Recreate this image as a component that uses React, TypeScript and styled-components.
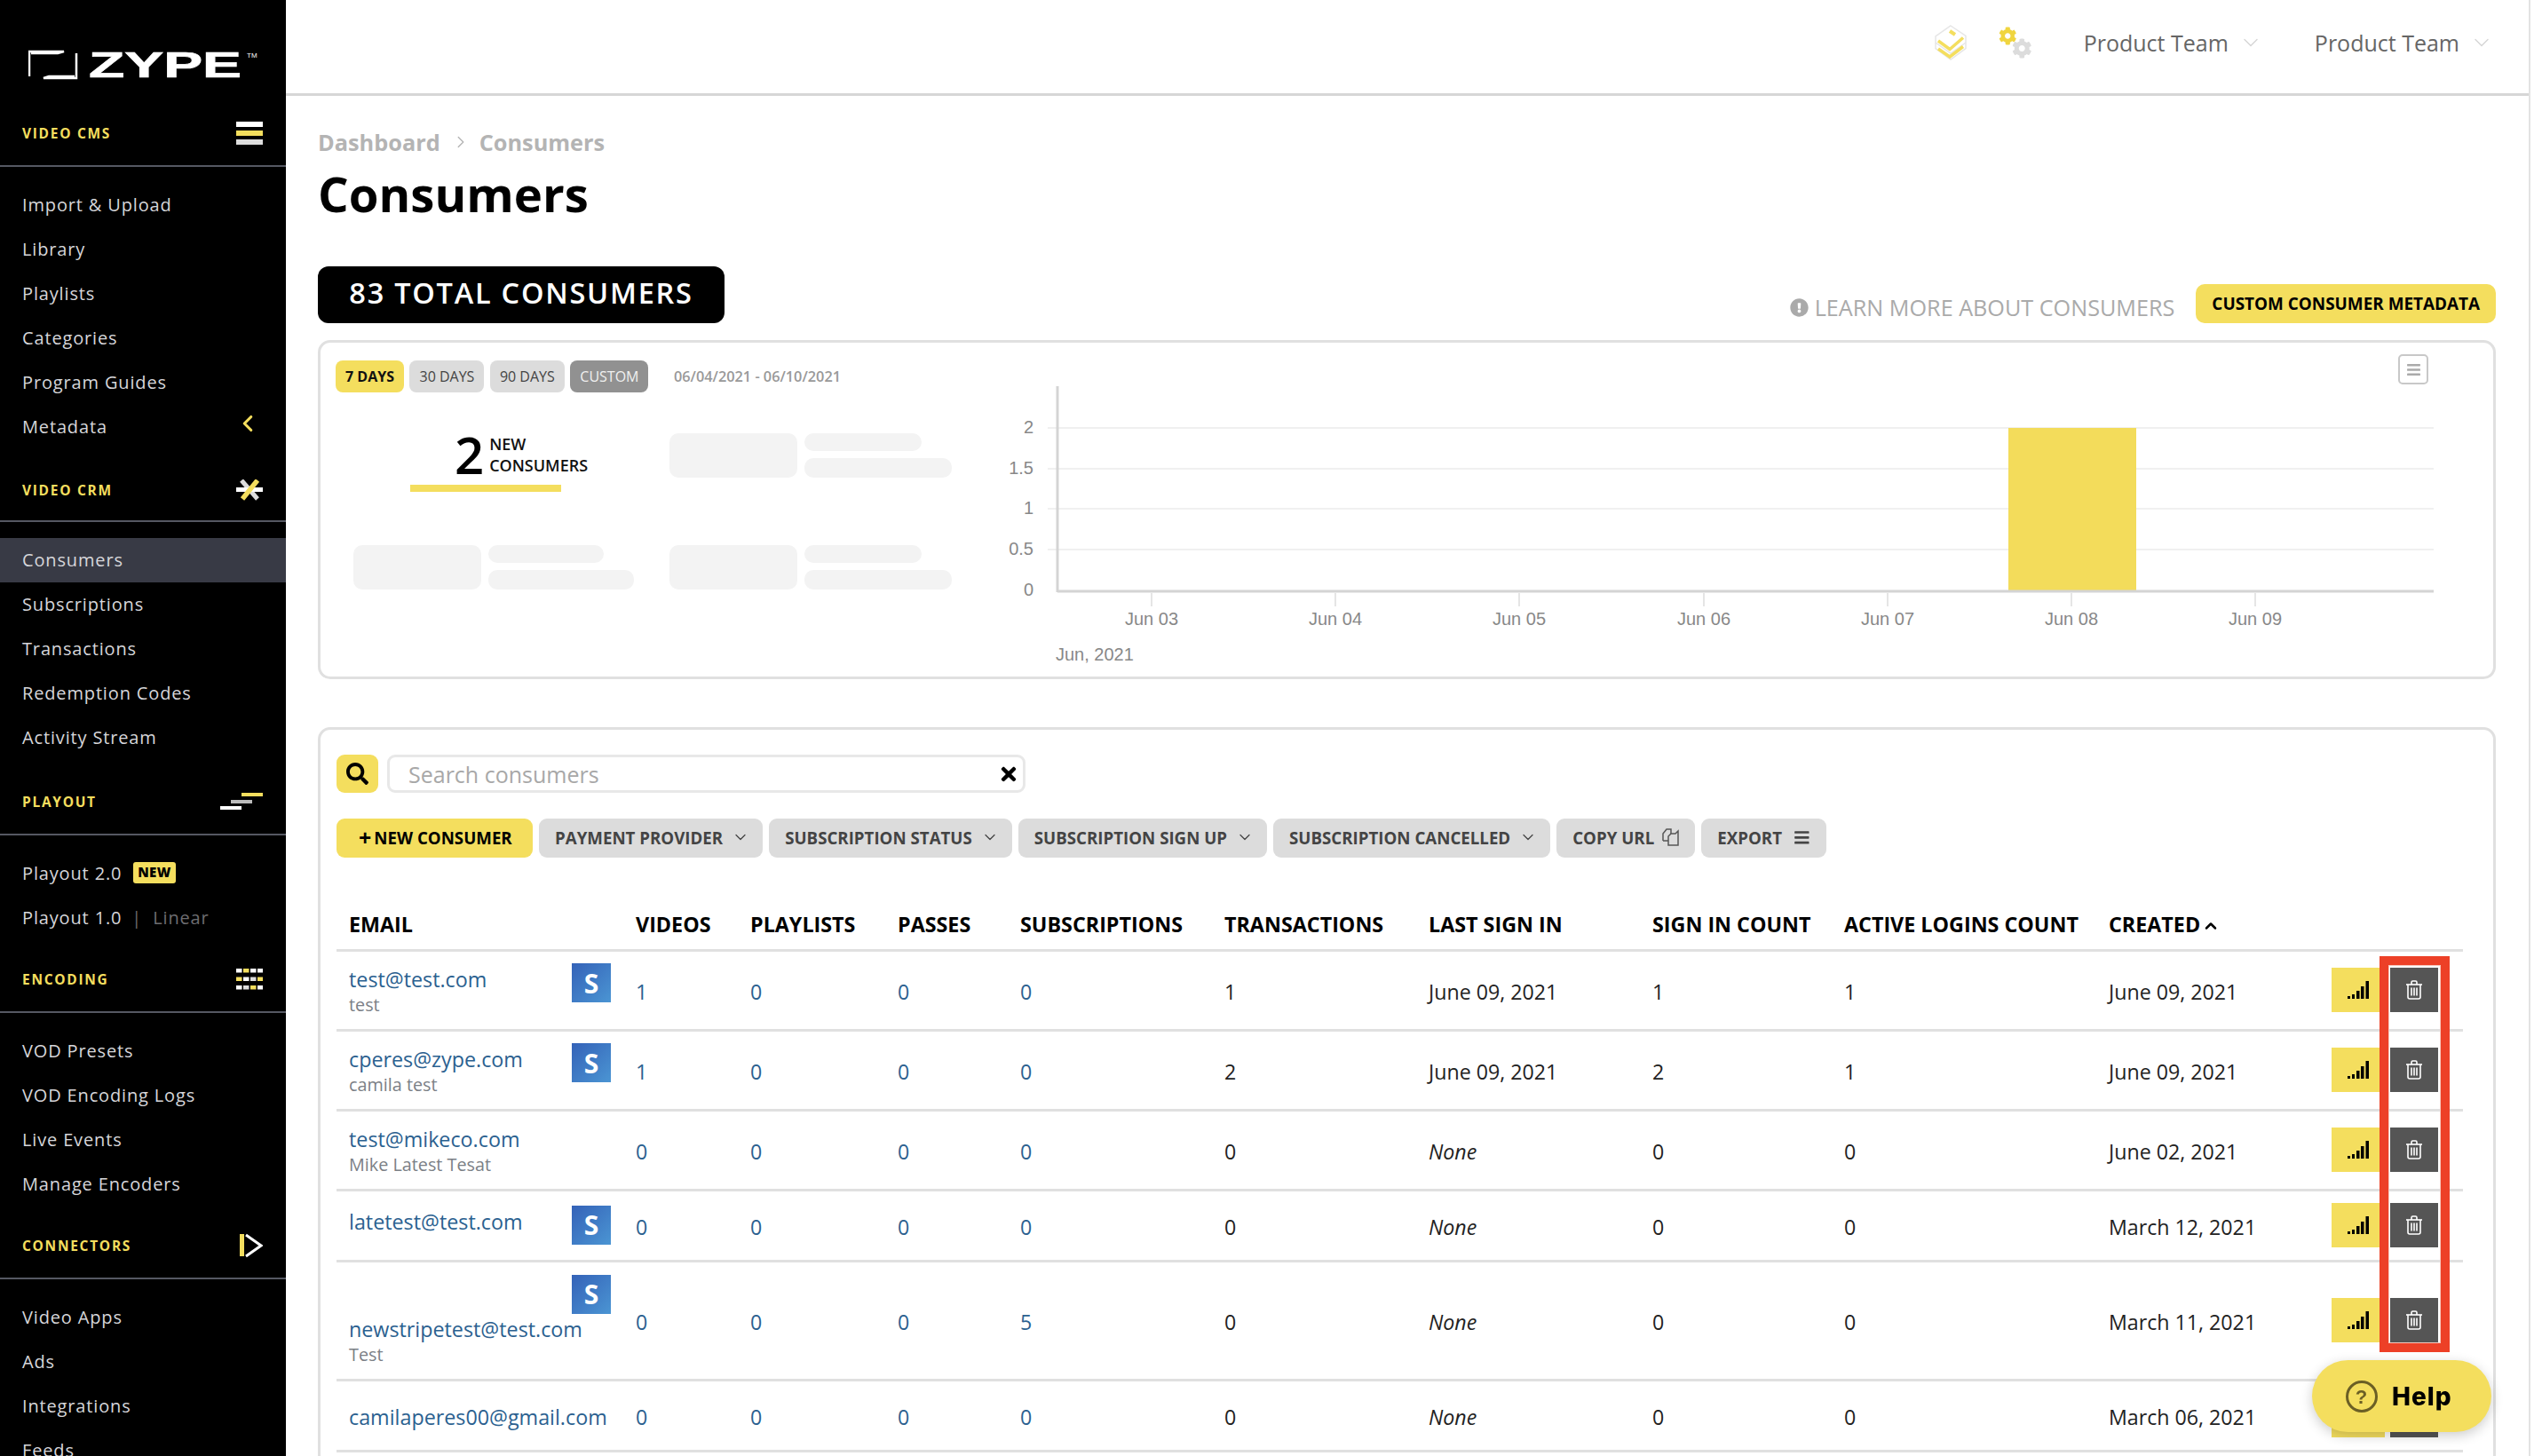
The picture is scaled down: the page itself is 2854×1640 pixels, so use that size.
import React from 'react';
import styled, { createGlobalStyle } from 'styled-components';
import { FaSearch, FaTimes, FaCog, FaBars, FaExclamationCircle } from 'react-icons/fa';
import { ChevronDown, ChevronRight, ChevronLeft, ChevronUp } from 'lucide-react';

const YELLOW = '#f4de5e';

const GlobalStyle = createGlobalStyle`
  html, body {
    margin: 0;
    padding: 0;
    background: #fff;
    font-family: "Open Sans", "Liberation Sans", sans-serif;
  }
  * {
    box-sizing: border-box;
  }
`;

const Page = styled.div`
  display: flex;
  width: 2854px;
  height: 1640px;
  overflow: hidden;
  padding-right: 4px;
`;

const Sidebar = styled.aside`
  flex: 0 0 322px;
  height: 1640px;
  overflow: hidden;
  background: #000;
`;

const LogoBlock = styled.div`
  height: 114px;
  padding: 56px 0 0 32px;
`;

const SectionHeader = styled.div<{ $top?: number; $shift?: number }>`
  display: flex;
  align-items: center;
  justify-content: space-between;
  height: 74px;
  margin-top: ${({ $top }) => $top ?? 0}px;
  padding: ${({ $shift }) => $shift ?? 0}px 26px 0 25px;
  border-bottom: 2px solid #555862;
  color: ${YELLOW};
  font-size: 15.5px;
  font-weight: 700;
  letter-spacing: 1.7px;
`;

const NavList = styled.ul`
  margin: 0;
  padding: 18px 0 0;
  list-style: none;
`;

const NavItem = styled.li<{ $active?: boolean }>`
  display: flex;
  align-items: center;
  justify-content: space-between;
  height: 50px;
  padding: 0 28px 2px 25px;
  background: ${({ $active }) => ($active ? '#383a45' : 'transparent')};
  color: #d6d6da;
  font-size: 20px;
  letter-spacing: 0.85px;
`;

const NavLabel = styled.span`
  display: flex;
  align-items: center;
`;

const CollapseIcon = styled(ChevronLeft)`
  margin-top: -6px;
  color: ${YELLOW};
`;

const NewTag = styled.span`
  display: inline-block;
  height: 24px;
  margin-left: 13px;
  padding: 0 5px;
  border-radius: 3px;
  background: ${YELLOW};
  color: #000;
  font-size: 15px;
  font-weight: 800;
  line-height: 23px;
  letter-spacing: 0.3px;
`;

const Muted = styled.span`
  margin-left: 11px;
  color: #6d6d70;
`;

const Main = styled.main`
  flex: 1;
  min-width: 0;
  border-right: 2px solid #e3e3e3;
`;

const TopBar = styled.header`
  display: flex;
  align-items: center;
  justify-content: flex-end;
  height: 108px;
  padding: 0 39px 10px 0;
  border-bottom: 3px solid #d6d6d6;
`;

const StackIcon = styled.svg`
  width: 36px;
  height: 40px;
  margin-right: 36px;
`;

const Gears = styled.div`
  display: flex;
  width: 38px;
  height: 36px;
  color: #f0d53f;
  font-size: 21px;

  svg:last-child {
    align-self: flex-end;
    margin-left: -5px;
    color: #dcdcdc;
    font-size: 23px;
  }
`;

const TeamMenu = styled.div`
  display: flex;
  align-items: center;
  margin-left: 58px;
  color: #666;
  font-size: 25px;

  svg {
    margin-left: 11px;
    color: #d5d5d5;
  }
`;

const Content = styled.div`
  padding: 36px 37px 0 36px;
`;

const Breadcrumb = styled.div`
  display: flex;
  align-items: center;
  height: 32px;
  color: #b4b4b4;
  font-size: 25.3px;
  font-weight: 700;

  svg {
    margin: 0 10px 0 12px;
    stroke-width: 1.5;
  }
`;

const Title = styled.h1`
  margin: 4px 0 44px;
  color: #000;
  font-size: 54.5px;
  font-weight: 700;
  line-height: 76px;
`;

const SummaryRow = styled.div`
  display: flex;
  align-items: flex-end;
  justify-content: space-between;
  margin-bottom: 19px;
`;

const TotalBadge = styled.div`
  display: flex;
  align-items: center;
  justify-content: center;
  width: 458px;
  height: 64px;
  padding-bottom: 5px;
  border-radius: 12px;
  background: #000;
  color: #fff;
  font-size: 32.5px;
  font-weight: 600;
  letter-spacing: 1.75px;
`;

const SummaryActions = styled.div`
  display: flex;
  align-items: flex-end;
  gap: 24px;
`;

const LearnMore = styled.span`
  display: flex;
  align-items: center;
  gap: 7px;
  color: #aaa;
  font-size: 25.2px;
  line-height: 36px;

  svg {
    font-size: 21px;
  }
`;

const MetadataButton = styled.div`
  display: flex;
  align-items: center;
  height: 44px;
  padding: 0 18px;
  border-radius: 10px;
  background: ${YELLOW};
  color: #000;
  font-size: 18.9px;
  font-weight: 700;
`;

const Panel = styled.section`
  position: relative;
  border: 3px solid #e0e0e0;
  border-radius: 14px;
  background: #fff;
`;

const ChartPanel = styled(Panel)`
  display: flex;
  height: 382px;
  margin-bottom: 54px;
`;

const StatsColumn = styled.div`
  flex: 0 0 739px;
  padding: 20px 0 0 17px;
`;

const RangeRow = styled.div`
  display: flex;
  align-items: center;
`;

const RangeButton = styled.div<{ $variant?: 'active' | 'custom' }>`
  display: flex;
  align-items: center;
  height: 36px;
  margin-right: 6.5px;
  padding: 0 11px;
  border-radius: 8px;
  background: ${({ $variant }) =>
    $variant === 'active' ? YELLOW : $variant === 'custom' ? '#919191' : '#dcdcdc'};
  color: ${({ $variant }) =>
    $variant === 'active' ? '#111' : $variant === 'custom' ? '#f0f0f0' : '#444'};
  font-size: 16px;
  font-weight: ${({ $variant }) => ($variant === 'active' ? 700 : 400)};
`;

const DateRange = styled.span`
  margin-left: 22px;
  color: #999;
  font-size: 16.3px;
  font-weight: 600;
`;

const StatsGrid = styled.div`
  display: grid;
  grid-template-columns: 318px 318px;
  grid-template-rows: 50px 50px;
  gap: 76px 38px;
  margin: 46px 0 0 20px;
`;

const StatCell = styled.div`
  position: relative;
`;

const StatValue = styled.div`
  display: flex;
  align-items: center;
  margin: -7px 0 0 114px;
`;

const StatNumber = styled.span`
  color: #000;
  font-size: 58px;
  font-weight: 600;
  line-height: 62px;
`;

const StatLabel = styled.span`
  margin-left: 6px;
  color: #111;
  font-size: 18px;
  font-weight: 600;
  line-height: 24px;
`;

const StatUnderline = styled.div`
  width: 170px;
  height: 8px;
  margin: 3px 0 0 64px;
  background: ${YELLOW};
`;

const SkeletonCell = styled.div`
  display: grid;
  grid-template-columns: 144px 1fr;
  grid-template-rows: 20px 22px;
  gap: 8px;
`;

const SkeletonBlock = styled.div<{ $w?: number }>`
  width: ${({ $w }) => ($w ? `${$w}px` : 'auto')};
  border-radius: 10px;
  background: #f3f3f3;

  &:first-child {
    grid-row: 1 / span 2;
  }
`;

const ChartSvg = styled.svg`
  flex: 0 0 1690px;
  height: 340px;
  margin-top: 39px;
`;

const ChartMenu = styled.div`
  position: absolute;
  top: 13px;
  right: 73px;
  display: flex;
  align-items: center;
  justify-content: center;
  width: 34px;
  height: 34px;
  border: 2px solid #c8c8c8;
  border-radius: 5px;
  color: #aaa;
  font-size: 17px;
`;

const ConsumersPanel = styled(Panel)`
  padding: 28px 34px 0 18px;
  height: 900px;
`;

const SearchRow = styled.div`
  display: flex;
  gap: 10px;
`;

const SearchButton = styled.div`
  display: flex;
  align-items: center;
  justify-content: center;
  width: 47px;
  height: 43px;
  border-radius: 9px;
  background: ${YELLOW};
  color: #000;
  font-size: 25px;
`;

const SearchBox = styled.div`
  display: flex;
  align-items: center;
  justify-content: space-between;
  width: 719px;
  height: 43px;
  padding: 0 4px 0 21px;
  border: 3px solid #e8e8e8;
  border-radius: 9px;
  color: #a8a8a8;
  font-size: 25px;

  svg {
    color: #000;
    font-size: 24px;
  }
`;

const Toolbar = styled.div`
  display: flex;
  gap: 7px;
  margin: 29px 0 48px;
`;

const ToolButton = styled.div<{ $primary?: boolean }>`
  display: flex;
  align-items: center;
  height: 44px;
  padding: 0 18px 2px;
  border-radius: 9px;
  background: ${({ $primary }) => ($primary ? YELLOW : '#dcdcdc')};
  color: ${({ $primary }) => ($primary ? '#000' : '#444')};
  font-size: 18.7px;
  font-weight: 700;
  white-space: nowrap;

  svg {
    margin-left: 9px;
  }
`;

const FilterButton = styled(ToolButton)`
  padding-right: 15px;

  svg {
    margin-left: 10px;
  }
`;

const ExportButton = styled(ToolButton)`
  svg {
    margin-left: 13px;
  }
`;

const NewButton = styled(ToolButton)`
  width: 221px;
  padding: 0 0 2px 25px;
`;

const PlusSign = styled.span`
  margin-right: 3px;
  font-size: 25px;
  line-height: 1;
`;

const Table = styled.table`
  width: 2395px;
  border-collapse: collapse;
  table-layout: fixed;
`;

const HeadCell = styled.th`
  height: 56px;
  padding: 0 14px;
  border-bottom: 3px solid #e0e0e0;
  color: #000;
  font-size: 23.3px;
  font-weight: 700;
  text-align: left;
  white-space: nowrap;
`;

const SortIcon = styled(ChevronUp)`
  margin-left: 2px;
  vertical-align: -3px;
`;

const Row = styled.tr<{ $h: number }>`
  height: ${({ $h }) => $h}px;
  border-bottom: 3px solid #e0e0e0;
`;

const Cell = styled.td`
  padding: 4px 14px 0;
  color: #222;
  font-size: 23.2px;
  vertical-align: middle;
  white-space: nowrap;
`;

const EmailCell = styled(Cell)`
  white-space: normal;
`;

const ProviderBadge = styled.div`
  float: right;
  display: flex;
  align-items: center;
  justify-content: center;
  width: 44px;
  height: 44px;
  margin: -3px 0 2px 4px;
  background: linear-gradient(135deg, #3462b8, #4b95d3);
  color: #fff;
  font-size: 30px;
  font-weight: 700;
`;

const Email = styled.div`
  color: #2b6190;
  font-size: 23.3px;
  line-height: 30px;
`;

const ConsumerName = styled.div`
  color: #7b8086;
  font-size: 19.8px;
  line-height: 28px;
`;

const CountLink = styled.span`
  color: #2b6190;
`;

const Italic = styled.span`
  font-style: italic;
`;

const ActionsCell = styled.td`
  padding: 0 14px;
  vertical-align: middle;
`;

const Actions = styled.div`
  display: flex;
  gap: 6px;
`;

const ActionButton = styled.div<{ $dark?: boolean }>`
  display: flex;
  align-items: center;
  justify-content: center;
  width: ${({ $dark }) => ($dark ? 54 : 60)}px;
  height: 50px;
  background: ${({ $dark }) => ($dark ? '#555' : YELLOW)};
`;

const Highlight = styled.div`
  position: absolute;
  top: 255px;
  left: 2319px;
  width: 79px;
  height: 446px;
  border: 10px solid #ed4027;
  box-shadow: inset 0 0 0 1px #f8c8bd;
  pointer-events: none;
`;

const HelpButton = styled.div`
  position: fixed;
  top: 1532px;
  left: 2604px;
  display: flex;
  align-items: center;
  gap: 16px;
  width: 202px;
  height: 81px;
  padding-left: 38px;
  border-radius: 41px;
  background: ${YELLOW};
  box-shadow: 0 4px 14px rgba(0, 0, 0, 0.2);
  color: #000;
  font-family: "Inter", "Open Sans", sans-serif;
  font-size: 28px;
  font-weight: 800;
  letter-spacing: 1px;
`;

const ZypeLogo = () => (
  <svg width="262" height="36" viewBox="0 0 262 36">
    <path d="M1 30V2H40L33 4H3" fill="none" stroke="#fff" strokeWidth="2.5" />
    <path d="M54 4V32H17L23 30H52" fill="none" stroke="#fff" strokeWidth="2.5" />
    <text
      x="68"
      y="31"
      fill="#fff"
      stroke="#fff"
      strokeWidth="0.7"
      fontFamily="Liberation Sans"
      fontWeight="700"
      fontSize="41"
      textLength="172"
      lengthAdjust="spacingAndGlyphs"
    >
      ZYPE
    </text>
    <text x="246" y="9" fill="#fff" fontFamily="Liberation Sans" fontSize="8">
      TM
    </text>
  </svg>
);

const MenuIcon = () => (
  <svg width="30" height="26" viewBox="0 0 30 26">
    <rect y="0" width="30" height="6" fill="#fff" />
    <rect y="10" width="30" height="6" fill={YELLOW} />
    <rect y="20" width="30" height="6" fill="#ddd" />
  </svg>
);

const CrossIcon = () => (
  <svg width="30" height="24" viewBox="0 0 30 24">
    <path d="M6 1 L24 22" stroke="#ddd" strokeWidth="5" />
    <rect y="9" width="30" height="5" fill="#fff" />
    <path d="M24 1 L7 22" stroke={YELLOW} strokeWidth="5.5" />
  </svg>
);

const PlayoutIcon = () => (
  <svg width="48" height="20" viewBox="0 0 48 20">
    <rect x="24" y="0" width="24" height="4" fill={YELLOW} />
    <rect x="12" y="8" width="24" height="4" fill="#bbb" />
    <rect x="0" y="15" width="24" height="4" fill="#fff" />
  </svg>
);

const encodingCells = [
  ['#fff', YELLOW, '#fff', '#fff'],
  [YELLOW, '#fff', '#ddd', YELLOW],
  ['#fff', '#ddd', YELLOW, '#fff'],
];

const EncodingIcon = () => (
  <svg width="30" height="24" viewBox="0 0 30 24">
    {encodingCells.map((row, r) =>
      row.map((fill, c) => (
        <rect key={`${r}-${c}`} x={c * 8} y={r * 9.5} width="6.5" height="4.5" fill={fill} />
      )),
    )}
  </svg>
);

const ConnectorIcon = () => (
  <svg width="26" height="30" viewBox="0 0 26 30">
    <rect x="0" y="2" width="5" height="25" fill={YELLOW} />
    <path d="M7 3L24 15L7 27" fill="none" stroke="#fff" strokeWidth="3" />
  </svg>
);

const SignalIcon = () => (
  <svg width="24" height="20" viewBox="0 0 24 20">
    <rect x="0" y="17" width="3" height="3" fill="#000" />
    <rect x="5" y="15" width="3" height="5" fill="#000" />
    <rect x="10" y="11" width="3.5" height="9" fill="#000" />
    <rect x="15" y="6" width="3.5" height="14" fill="#000" />
    <rect x="20.5" y="0" width="3.5" height="20" fill="#000" />
  </svg>
);

const TrashIcon = () => (
  <svg width="18" height="22" viewBox="0 0 18 22" fill="none" stroke="#fff" strokeWidth="1.6">
    <path d="M0 5H18" />
    <path d="M6 5V2.5C6 1.5 6.6 1 7.5 1H10.5C11.4 1 12 1.5 12 2.5V5" />
    <path d="M2 5V19C2 20.2 2.8 21 4 21H14C15.2 21 16 20.2 16 19V5" />
    <path d="M6 8.5V17.5M9 8.5V17.5M12 8.5V17.5" />
  </svg>
);

const CopyIcon = () => (
  <svg width="19" height="20" viewBox="0 0 19 20" fill="none" stroke="#555" strokeWidth="1.5">
    <path d="M1 14V6L5 1H10V6" />
    <path d="M1 14H7" />
    <path d="M7 19V9L10 6H15L18 3V19Z" />
  </svg>
);

const StackGlyph = () => (
  <StackIcon viewBox="0 0 36 40">
    <path d="M18 1L35 12.5V26.5L18 39L1 26.5V13Z" fill="#fff" stroke="#e6e6e6" strokeWidth="1.5" />
    <path d="M1 20L18 32L35 20" fill="none" stroke="#e6e6e6" strokeWidth="1.5" />
    <path d="M4 18L17 27.5L32 14.5" fill="none" stroke={YELLOW} strokeWidth="3.5" />
    <path d="M4 27L17 36L32 24.5" fill="none" stroke={YELLOW} strokeWidth="3.5" />
    <path d="M17 7L23 11" stroke={YELLOW} strokeWidth="4" />
  </StackIcon>
);

const gridLines = [57, 103, 148, 194];
const yLabels = [
  { label: '2', y: 57 },
  { label: '1.5', y: 103 },
  { label: '1', y: 148 },
  { label: '0.5', y: 194 },
  { label: '0', y: 240 },
];
const xLabels = [
  { label: 'Jun 03', x: 197 },
  { label: 'Jun 04', x: 404 },
  { label: 'Jun 05', x: 611 },
  { label: 'Jun 06', x: 819 },
  { label: 'Jun 07', x: 1026 },
  { label: 'Jun 08', x: 1233 },
  { label: 'Jun 09', x: 1440 },
];

const ConsumersChart = () => (
  <ChartSvg viewBox="0 0 1690 340" fontFamily="Liberation Sans" fontSize="20" fill="#888">
    {gridLines.map((y) => (
      <line key={y} x1="80" x2="1641" y1={y} y2={y} stroke="#f0f0f0" strokeWidth="2" />
    ))}
    <rect x="1162" y="57" width="144" height="183" fill="#f3dc5b" />
    <line x1="91" x2="91" y1="10" y2="242" stroke="#d4d4d4" strokeWidth="3" />
    <line x1="91" x2="1641" y1="241" y2="241" stroke="#d4d4d4" strokeWidth="3" />
    {yLabels.map((t) => (
      <text key={t.label} x="64" y={t.y + 6} textAnchor="end">
        {t.label}
      </text>
    ))}
    {xLabels.map((t) => (
      <g key={t.label}>
        <line x1={t.x} x2={t.x} y1="243" y2="258" stroke="#ddd" strokeWidth="1.5" />
        <text x={t.x} y="279" textAnchor="middle">
          {t.label}
        </text>
      </g>
    ))}
    <text x="89" y="319">
      Jun, 2021
    </text>
  </ChartSvg>
);

const consumers = [
  { h: 90, email: 'test@test.com', name: 'test', stripe: true, videos: 1, subs: 0, tx: 1, last: 'June 09, 2021', signIn: 1, active: 1, created: 'June 09, 2021' },
  { h: 90, email: 'cperes@zype.com', name: 'camila test', stripe: true, videos: 1, subs: 0, tx: 2, last: 'June 09, 2021', signIn: 2, active: 1, created: 'June 09, 2021' },
  { h: 90, email: 'test@mikeco.com', name: 'Mike Latest Tesat', stripe: false, videos: 0, subs: 0, tx: 0, last: null, signIn: 0, active: 0, created: 'June 02, 2021' },
  { h: 80, email: 'latetest@test.com', name: '', stripe: true, videos: 0, subs: 0, tx: 0, last: null, signIn: 0, active: 0, created: 'March 12, 2021' },
  { h: 134, email: 'newstripetest@test.com', name: 'Test', stripe: true, videos: 0, subs: 5, tx: 0, last: null, signIn: 0, active: 0, created: 'March 11, 2021' },
  { h: 80, email: 'camilaperes00@gmail.com', name: '', stripe: false, videos: 0, subs: 0, tx: 0, last: null, signIn: 0, active: 0, created: 'March 06, 2021' },
];

const columns = [323, 129, 166, 138, 230, 230, 252, 216, 298, 251, 162];

const filters = ['PAYMENT PROVIDER', 'SUBSCRIPTION STATUS', 'SUBSCRIPTION SIGN UP', 'SUBSCRIPTION CANCELLED'];

export default function App() {
  return (
    <Page>
      <GlobalStyle />
      <Sidebar>
        <LogoBlock>
          <ZypeLogo />
        </LogoBlock>
        <SectionHeader>
          VIDEO CMS
          <MenuIcon />
        </SectionHeader>
        <NavList>
          <NavItem>Import &amp; Upload</NavItem>
          <NavItem>Library</NavItem>
          <NavItem>Playlists</NavItem>
          <NavItem>Categories</NavItem>
          <NavItem>Program Guides</NavItem>
          <NavItem>
            Metadata
            <CollapseIcon size={30} strokeWidth={2.5} />
          </NavItem>
        </NavList>
        <SectionHeader $top={8} $shift={4}>
          VIDEO CRM
          <CrossIcon />
        </SectionHeader>
        <NavList>
          <NavItem $active>Consumers</NavItem>
          <NavItem>Subscriptions</NavItem>
          <NavItem>Transactions</NavItem>
          <NavItem>Redemption Codes</NavItem>
          <NavItem>Activity Stream</NavItem>
        </NavList>
        <SectionHeader $top={11}>
          PLAYOUT
          <PlayoutIcon />
        </SectionHeader>
        <NavList>
          <NavItem>
            <NavLabel>
              Playout 2.0
              <NewTag>NEW</NewTag>
            </NavLabel>
          </NavItem>
          <NavItem>
            <NavLabel>
              Playout 1.0
              <Muted>|&nbsp; Linear</Muted>
            </NavLabel>
          </NavItem>
        </NavList>
        <SectionHeader $top={8}>
          ENCODING
          <EncodingIcon />
        </SectionHeader>
        <NavList>
          <NavItem>VOD Presets</NavItem>
          <NavItem>VOD Encoding Logs</NavItem>
          <NavItem>Live Events</NavItem>
          <NavItem>Manage Encoders</NavItem>
        </NavList>
        <SectionHeader $top={8}>
          CONNECTORS
          <ConnectorIcon />
        </SectionHeader>
        <NavList>
          <NavItem>Video Apps</NavItem>
          <NavItem>Ads</NavItem>
          <NavItem>Integrations</NavItem>
          <NavItem>Feeds</NavItem>
        </NavList>
      </Sidebar>

      <Main>
        <TopBar>
          <StackGlyph />
          <Gears>
            <FaCog />
            <FaCog />
          </Gears>
          <TeamMenu>
            Product Team
            <ChevronDown size={28} strokeWidth={1.2} />
          </TeamMenu>
          <TeamMenu>
            Product Team
            <ChevronDown size={28} strokeWidth={1.2} />
          </TeamMenu>
        </TopBar>

        <Content>
          <Breadcrumb>
            Dashboard
            <ChevronRight size={22} />
            Consumers
          </Breadcrumb>
          <Title>Consumers</Title>

          <SummaryRow>
            <TotalBadge>83 TOTAL CONSUMERS</TotalBadge>
            <SummaryActions>
              <LearnMore>
                <FaExclamationCircle />
                LEARN MORE ABOUT CONSUMERS
              </LearnMore>
              <MetadataButton>CUSTOM CONSUMER METADATA</MetadataButton>
            </SummaryActions>
          </SummaryRow>

          <ChartPanel>
            <StatsColumn>
              <RangeRow>
                <RangeButton $variant="active">7 DAYS</RangeButton>
                <RangeButton>30 DAYS</RangeButton>
                <RangeButton>90 DAYS</RangeButton>
                <RangeButton $variant="custom">CUSTOM</RangeButton>
                <DateRange>06/04/2021 - 06/10/2021</DateRange>
              </RangeRow>
              <StatsGrid>
                <StatCell>
                  <StatValue>
                    <StatNumber>2</StatNumber>
                    <StatLabel>
                      NEW
                      <br />
                      CONSUMERS
                    </StatLabel>
                  </StatValue>
                  <StatUnderline />
                </StatCell>
                <SkeletonCell>
                  <SkeletonBlock />
                  <SkeletonBlock $w={132} />
                  <SkeletonBlock $w={166} />
                </SkeletonCell>
                <SkeletonCell>
                  <SkeletonBlock />
                  <SkeletonBlock $w={130} />
                  <SkeletonBlock $w={164} />
                </SkeletonCell>
                <SkeletonCell>
                  <SkeletonBlock />
                  <SkeletonBlock $w={132} />
                  <SkeletonBlock $w={166} />
                </SkeletonCell>
              </StatsGrid>
            </StatsColumn>
            <ConsumersChart />
            <ChartMenu>
              <FaBars />
            </ChartMenu>
          </ChartPanel>

          <ConsumersPanel>
            <SearchRow>
              <SearchButton>
                <FaSearch />
              </SearchButton>
              <SearchBox>
                Search consumers
                <FaTimes />
              </SearchBox>
            </SearchRow>
            <Toolbar>
              <NewButton $primary>
                <PlusSign>+</PlusSign>
                NEW CONSUMER
              </NewButton>
              {filters.map((filter) => (
                <FilterButton key={filter}>
                  {filter}
                  <ChevronDown size={20} strokeWidth={1.5} />
                </FilterButton>
              ))}
              <ToolButton>
                COPY URL
                <CopyIcon />
              </ToolButton>
              <ExportButton>
                EXPORT
                <FaBars />
              </ExportButton>
            </Toolbar>
            <Table>
              <colgroup>
                {columns.map((width, i) => (
                  <col key={i} width={width} />
                ))}
              </colgroup>
              <thead>
                <tr>
                  <HeadCell>EMAIL</HeadCell>
                  <HeadCell>VIDEOS</HeadCell>
                  <HeadCell>PLAYLISTS</HeadCell>
                  <HeadCell>PASSES</HeadCell>
                  <HeadCell>SUBSCRIPTIONS</HeadCell>
                  <HeadCell>TRANSACTIONS</HeadCell>
                  <HeadCell>LAST SIGN IN</HeadCell>
                  <HeadCell>SIGN IN COUNT</HeadCell>
                  <HeadCell>ACTIVE LOGINS COUNT</HeadCell>
                  <HeadCell>
                    CREATED
                    <SortIcon size={20} strokeWidth={3} />
                  </HeadCell>
                  <HeadCell />
                </tr>
              </thead>
              <tbody>
                {consumers.map((c) => (
                  <Row key={c.email} $h={c.h}>
                    <EmailCell>
                      {c.stripe && <ProviderBadge>S</ProviderBadge>}
                      <Email>{c.email}</Email>
                      {c.name && <ConsumerName>{c.name}</ConsumerName>}
                    </EmailCell>
                    <Cell>
                      <CountLink>{c.videos}</CountLink>
                    </Cell>
                    <Cell>
                      <CountLink>0</CountLink>
                    </Cell>
                    <Cell>
                      <CountLink>0</CountLink>
                    </Cell>
                    <Cell>
                      <CountLink>{c.subs}</CountLink>
                    </Cell>
                    <Cell>{c.tx}</Cell>
                    <Cell>{c.last ?? <Italic>None</Italic>}</Cell>
                    <Cell>{c.signIn}</Cell>
                    <Cell>{c.active}</Cell>
                    <Cell>{c.created}</Cell>
                    <ActionsCell>
                      <Actions>
                        <ActionButton>
                          <SignalIcon />
                        </ActionButton>
                        <ActionButton $dark>
                          <TrashIcon />
                        </ActionButton>
                      </Actions>
                    </ActionsCell>
                  </Row>
                ))}
              </tbody>
            </Table>
            <Highlight />
          </ConsumersPanel>
        </Content>
      </Main>

      <HelpButton>
        <svg width="36" height="36" viewBox="0 0 36 36">
          <circle cx="18" cy="18" r="16.5" fill="none" stroke="#6b5f25" strokeWidth="3" />
          <text x="18" y="26" textAnchor="middle" fill="#6b5f25" fontFamily="Liberation Sans" fontWeight="700" fontSize="22">
            ?
          </text>
        </svg>
        Help
      </HelpButton>
    </Page>
  );
}
